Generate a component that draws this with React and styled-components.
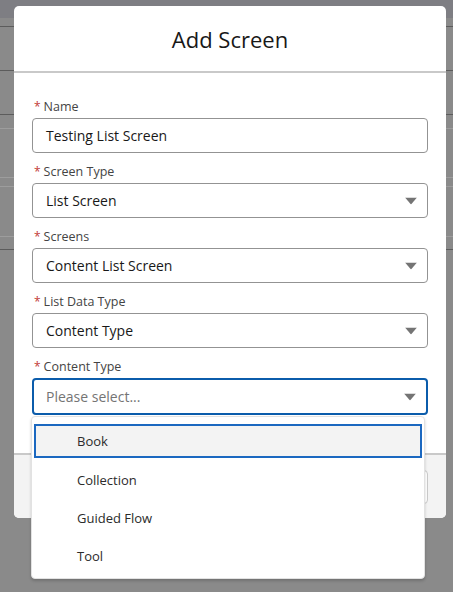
import React from 'react';
import styled, { createGlobalStyle } from 'styled-components';

const GlobalStyle = createGlobalStyle`
  html, body {
    margin: 0;
    padding: 0;
    background: #8a8a8a;
    font-family: "Open Sans", "Noto Sans", sans-serif;
  }
  * { box-sizing: border-box; }
`;

const Page = styled.div`
  position: relative;
  width: 453px;
  height: 592px;
  overflow: hidden;
  background: #8a8a8a;
`;

const TopBar = styled.div`
  height: 18px;
  background: #7e7e83;
`;

const BackRow = styled.div`
  height: ${p => p.h}px;
  border-bottom: 1px solid ${p => (p.dark ? '#5c5c5c' : '#9d9d9d')};
`;

const Modal = styled.div`
  position: absolute;
  top: 6px;
  left: 14px;
  width: 432px;
  background: #fff;
  border-radius: 5px;
`;

const Header = styled.div`
  height: 67px;
  display: flex;
  align-items: center;
  justify-content: center;
  border-bottom: 2px solid #c9c9c9;
`;

const Title = styled.h2`
  margin: 0;
  font-size: 22px;
  font-weight: 400;
  color: #181818;
`;

const Body = styled.div`
  padding: 25px 18px 38px;
  display: flex;
  flex-direction: column;
  gap: 10px;
`;

const Field = styled.div`
  position: relative;
  display: flex;
  flex-direction: column;
  gap: 4px;
`;

const Label = styled.label`
  display: flex;
  align-items: center;
  height: 16px;
  font-size: 12.5px;
  color: #444;
  padding-left: 2px;
`;

const Req = styled.span`
  color: #c23934;
  margin-right: 3px;
  font-size: 12px;
`;

const Box = styled.div`
  position: relative;
  height: 35px;
  display: flex;
  align-items: center;
  padding-left: 13px;
  border: ${p => (p.focused ? '2px solid #0b5cab' : '1px solid #939393')};
  border-radius: 4px;
  font-size: 14px;
  color: ${p => (p.placeholder ? '#747474' : '#181818')};
  ${p => p.focused && 'height: 37px; padding-left: 12px;'}
`;

const Arrow = styled.svg`
  position: absolute;
  right: 10px;
  top: 50%;
  transform: translateY(-50%);
`;

const Footer = styled.div`
  height: 65px;
  background: #f3f3f3;
  border-top: 2px solid #c9c9c9;
  border-radius: 0 0 5px 5px;
  display: flex;
  align-items: center;
  justify-content: flex-end;
  gap: 6px;
  padding: 0 18px;
`;

const Button = styled.button`
  height: 34px;
  padding: 0 16px;
  border: 1px solid #c9c9c9;
  border-radius: 4px;
  background: ${p => (p.primary ? '#0176d3' : '#fff')};
  color: ${p => (p.primary ? '#fff' : '#0176d3')};
  font-family: inherit;
  font-size: 13px;
`;

const List = styled.ul`
  position: absolute;
  top: calc(100% + 1px);
  left: -1px;
  width: 394px;
  margin: 0;
  padding: 7px 2px 3px;
  list-style: none;
  background: #fff;
  border: 1px solid #e2e2e2;
  border-radius: 4px;
  box-shadow: 0 2px 3px rgba(0, 0, 0, 0.18);
  z-index: 2;
`;

const Option = styled.li`
  height: ${p => (p.active ? 34 : 38)}px;
  margin-bottom: ${p => (p.active ? 3 : 0)}px;
  display: flex;
  align-items: center;
  padding-left: ${p => (p.active ? 41 : 43)}px;
  font-size: 13px;
  color: #2b2b2b;
  background: ${p => (p.active ? '#f3f3f3' : 'transparent')};
  border: ${p => (p.active ? '2px solid #1b68c0' : 'none')};
`;

const Caret = () => (
  <Arrow width="12" height="7" viewBox="0 0 12 7">
    <path d="M0 0h12L6 7z" fill="#747474" />
  </Arrow>
);

const rows = [
  { h: 10, dark: true },
  { h: 45, dark: true },
  { h: 45, dark: true },
  { h: 15, dark: false },
  { h: 50, dark: false },
  { h: 10, dark: false },
  { h: 51, dark: false },
  { h: 14, dark: true },
];

const fields = [
  { label: 'Name', value: 'Testing List Screen', select: false },
  { label: 'Screen Type', value: 'List Screen', select: true },
  { label: 'Screens', value: 'Content List Screen', select: true },
  { label: 'List Data Type', value: 'Content Type', select: true },
];

const options = ['Book', 'Collection', 'Guided Flow', 'Tool'];

export default function App() {
  return (
    <Page>
      <GlobalStyle />
      <TopBar />
      {rows.map((r, i) => (
        <BackRow key={i} h={r.h - 1} dark={r.dark} />
      ))}
      <Modal>
        <Header>
          <Title>Add Screen</Title>
        </Header>
        <Body>
          {fields.map(f => (
            <Field key={f.label}>
              <Label><Req>*</Req>{f.label}</Label>
              <Box>
                {f.value}
                {f.select && <Caret />}
              </Box>
            </Field>
          ))}
          <Field>
            <Label><Req>*</Req>Content Type</Label>
            <Box focused placeholder="true">
              Please select...
              <Caret />
            </Box>
            <List>
              {options.map((o, i) => (
                <Option key={o} active={i === 0}>{o}</Option>
              ))}
            </List>
          </Field>
        </Body>
        <Footer>
          <Button>Cancel</Button>
          <Button>Save</Button>
        </Footer>
      </Modal>
    </Page>
  );
}
